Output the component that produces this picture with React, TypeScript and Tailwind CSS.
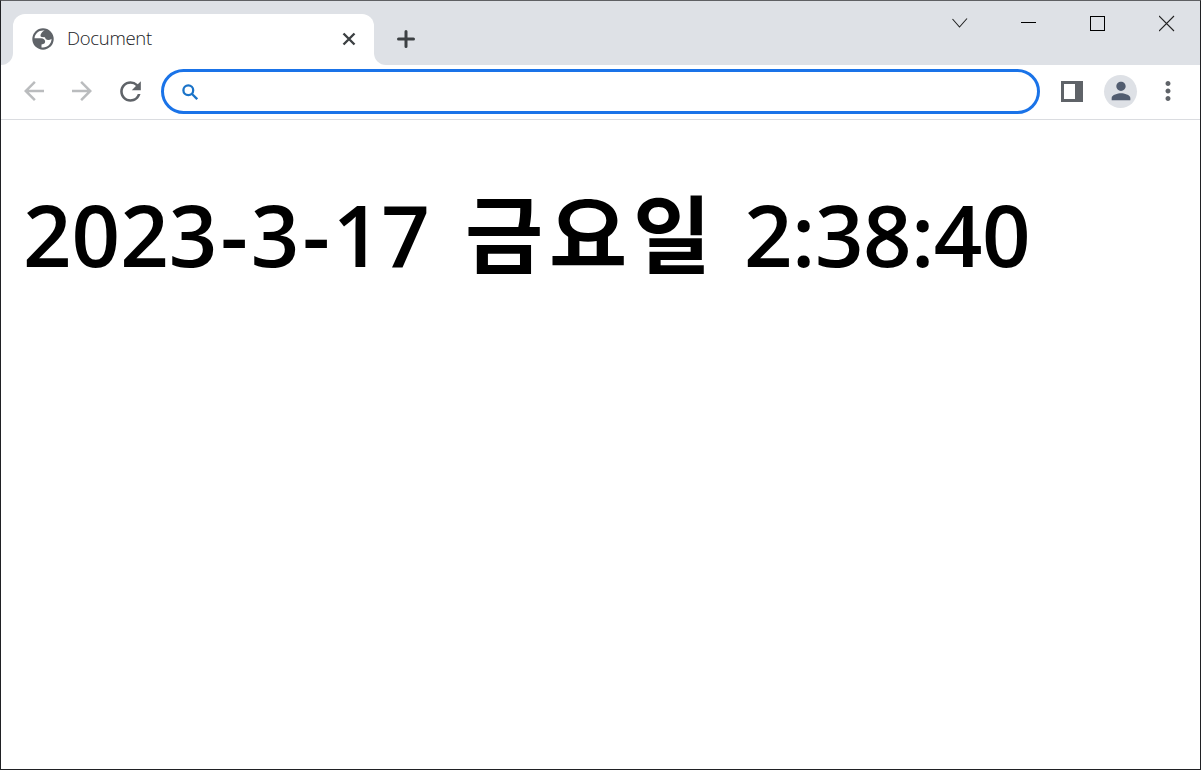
import type { ReactNode } from 'react'
import { MdArrowBack, MdArrowForward, MdMoreVert, MdPerson, MdRefresh } from 'react-icons/md'

function GlobeIcon() {
  return (
    <svg viewBox="0 0 22 22" className="h-[22px] w-[22px] shrink-0" aria-hidden="true">
      <circle cx="11" cy="11" r="10.7" fill="#5f6368" />
      <path
        d="M2.5 10.3C2.8 5.9 6.5 2.5 11 2.5h1.6C10.4 3.5 9.3 4.8 8.6 6.8q-.7 1.7 1 2.1l3.3.3q.4 2.6 3 2.8 2.2.1 3.6-1.2c.1 4.8-3.7 8.7-8.5 8.7H9.5v-3.1q3.9-.2 3.6-3.1-.4-2.7-4-3z"
        fill="white"
      />
    </svg>
  )
}

function SidePanelIcon() {
  return (
    <svg viewBox="0 0 22 21" className="h-[21px] w-[22px]" aria-hidden="true">
      <path fillRule="evenodd" d="M0 0h22v21H0zM3 3v15h11V3z" fill="#5f6368" />
    </svg>
  )
}

function WindowControls() {
  return (
    <div className="mt-3 mr-[25px] ml-auto flex h-5 gap-[53px]">
      <svg viewBox="0 0 16 20" className="h-5 w-4" fill="none" stroke="#222" strokeWidth="1.1">
        <path d="M.5 6l7 8 7.5-8.5" />
      </svg>
      <svg viewBox="0 0 16 20" className="h-5 w-4" fill="none" stroke="black" shapeRendering="crispEdges">
        <path d="M0 9.5h15" />
      </svg>
      <svg viewBox="0 0 16 20" className="h-5 w-4" fill="none" stroke="black" shapeRendering="crispEdges">
        <path d="M.5 3.5h14v14H.5z" />
      </svg>
      <svg viewBox="0 0 16 20" className="h-5 w-4" fill="none" stroke="#222" strokeWidth="1.1">
        <path d="M0 3l15 15M15 3L0 18" />
      </svg>
    </div>
  )
}

function TabStrip() {
  return (
    <div className="flex h-16 bg-[#dee1e6]">
      <div className="flex h-full w-3 bg-white">
        <div className="h-full w-3 rounded-br-xl bg-[#dee1e6]" />
      </div>
      <div className="flex bg-[#dee1e6] pt-[13px]">
        <div className="flex w-[361px] items-center rounded-t-xl bg-white pr-[18px] pb-px pl-[19px] text-[#3c4043]">
          <GlobeIcon />
          <span className="ml-[13px] pb-px text-[18.5px] leading-none font-light tracking-[-0.3px] text-[#202124]">Document</span>
          <svg viewBox="0 0 14 14" className="ml-auto h-3.5 w-3.5" stroke="currentColor" strokeWidth="2.4">
            <path d="M1.5 1.5l11 11M12.5 1.5l-11 11" />
          </svg>
        </div>
      </div>
      <div className="flex flex-1 bg-white">
        <div className="flex flex-1 rounded-bl-xl bg-[#dee1e6]">
          <svg viewBox="0 0 18 18" className="mt-[29px] ml-[23px] h-[18px] w-[18px] text-[#3c4043]" stroke="currentColor" strokeWidth="3" strokeLinecap="round">
            <path d="M9 1.5v15M1.5 9h15" />
          </svg>
          <WindowControls />
        </div>
      </div>
    </div>
  )
}

function NavButton({ children }: { children: ReactNode }) {
  return <button className="flex h-12 w-12 items-center justify-center">{children}</button>
}

function Toolbar() {
  return (
    <div className="flex h-[55px] items-center border-b border-[#dadce0] pb-[2px] pl-[9px] text-[#5f6368]">
      <NavButton><MdArrowBack className="h-[30px] w-[30px] text-[#babcbe]" /></NavButton>
      <NavButton><MdArrowForward className="h-[30px] w-[30px] text-[#babcbe]" /></NavButton>
      <NavButton><MdRefresh className="h-[31px] w-[31px]" /></NavButton>
      <div className="ml-[7px] flex h-[45px] w-[879px] items-center rounded-full border-3 border-[#1a73e8] pl-[18px]">
        <svg viewBox="0 0 16 16" className="mt-px h-4 w-4 text-[#1a73c8]" fill="none" stroke="currentColor" strokeWidth="2.3">
          <circle cx="6.3" cy="6.3" r="4.9" />
          <path d="M10 10l5.2 5.2" />
        </svg>
      </div>
      <div className="ml-[21px]"><SidePanelIcon /></div>
      <div className="ml-[21px] flex h-[33px] w-[33px] items-center justify-center rounded-full bg-[#dee1e6]">
        <MdPerson className="h-7 w-7 text-[#525d70]" />
      </div>
      <MdMoreVert className="ml-4 h-[30px] w-[30px]" />
    </div>
  )
}

export default function App() {
  return (
    <div className="flex h-[770px] w-[1201px] flex-col border border-[#202124] border-t-[#5f6063] bg-white font-['Open_Sans','Noto_Sans_CJK_KR',sans-serif]">
      <TabStrip />
      <Toolbar />
      <main className="flex-1 pt-14 pl-[22px]">
        <h1 className="flex items-baseline text-[85px] leading-[116px] font-semibold whitespace-nowrap text-black">
          <span className="w-[442px]">
            2023<span className="px-[3px]">-</span>3<span className="px-[3px]">-</span>17
          </span>
          <span className="w-[279px] tracking-[5.8px]">금요일</span>
          <span className="tracking-[-0.5px]">2:38:40</span>
        </h1>
      </main>
    </div>
  )
}
